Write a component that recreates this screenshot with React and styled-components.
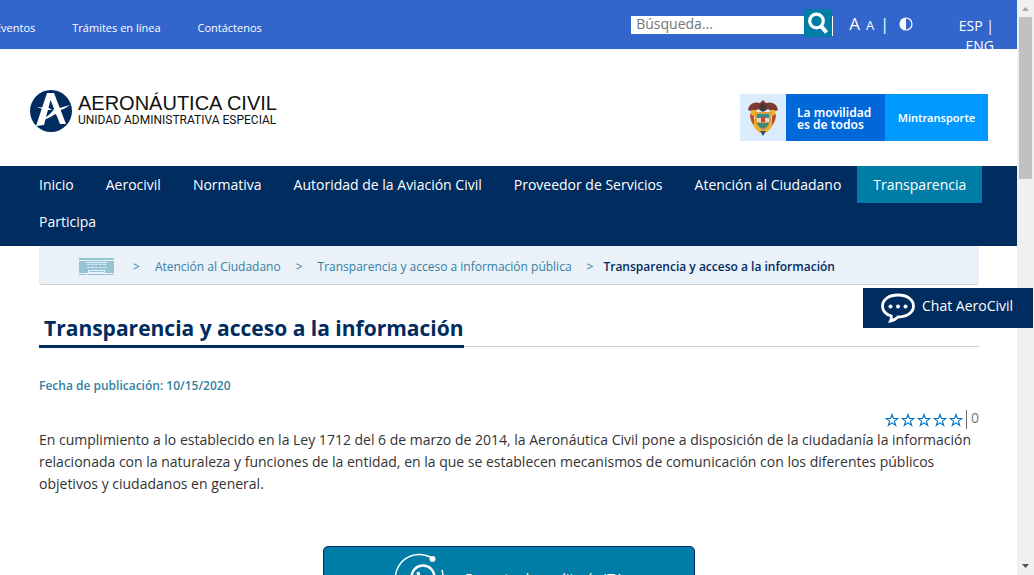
import React from "react";
import styled, { createGlobalStyle } from "styled-components";

const navy = "#002c5f";
const teal = "#007da7";
const blue = "#3266cc";
const muted = "#35809f";

const GlobalStyle = createGlobalStyle`
  * { box-sizing: border-box; }
  body { margin: 0; background: #fff; font-family: "Open Sans", "Noto Sans", sans-serif; }
  a { color: inherit; text-decoration: none; }
  ul, ol { list-style: none; margin: 0; padding: 0; }
  button { font-family: inherit; border: 0; cursor: pointer; }
  svg { display: block; flex: none; }
`;

const Shell = styled.div`
  display: flex;
  height: 100vh;
  overflow: hidden;
`;

const Page = styled.div`
  flex: 1;
  min-width: 0;
  height: 100%;
  overflow: hidden;
`;

const TopBar = styled.header`
  display: flex;
  justify-content: space-between;
  height: 49px;
  overflow: hidden;
  background: ${blue};
  color: #fff;
`;

const TopLinks = styled.ul`
  display: flex;
  gap: 37px;
  margin-left: -5px;
  padding-top: 20px;
  font-size: 11px;
  line-height: 16px;
  white-space: nowrap;
`;

const TopTools = styled.div`
  display: flex;
  align-items: flex-start;
  padding-right: 23px;
`;

const SearchForm = styled.form`
  display: flex;
  align-items: flex-start;
  padding-top: 9px;
`;

const SearchInput = styled.input`
  width: 173px;
  height: 18px;
  margin-top: 7px;
  padding: 0 5px 3px;
  border: 0;
  border-radius: 0;
  background: #fff;
  font: 14px "Open Sans", sans-serif;
  color: #333;
  &::placeholder { color: #757575; opacity: 1; }
`;

const SearchButton = styled.button`
  display: flex;
  align-items: center;
  justify-content: center;
  width: 28px;
  height: 28px;
  padding: 0;
  background: ${teal};
`;

const SearchEdge = styled.span`
  width: 1px;
  height: 20px;
  margin-top: 7px;
  background: #fff;
`;

const Access = styled.div`
  display: flex;
  align-items: baseline;
  gap: 6px;
  padding-top: 12px;
  margin-left: 16px;
  line-height: 24px;
`;

const Divider = styled.span`
  margin-right: 4px;
`;

const PlainButton = styled.button`
  padding: 0;
  background: none;
  color: #fff;
  font-size: ${(p) => p.$size || 14}px;
`;

const ContrastButton = styled(PlainButton)`
  align-self: flex-start;
  padding-top: 5px;
`;

const Languages = styled.div`
  width: 40px;
  margin-left: 41px;
  padding-top: 16px;
  text-align: right;
  font-size: 14px;
  line-height: 20px;
`;

const Brand = styled.div`
  display: flex;
  align-items: center;
  justify-content: space-between;
  height: 117px;
  padding: 6px 29px 0 30px;
`;

const Logo = styled.a`
  display: flex;
  align-items: center;
  gap: 6px;
  color: #111;
  font-family: "Liberation Sans", Arial, sans-serif;
  white-space: nowrap;
`;

const LogoName = styled.span`
  display: block;
  font-size: 20px;
  line-height: 18px;
`;

const LogoUnit = styled.span`
  display: block;
  font-family: Roboto, "Liberation Sans", sans-serif;
  font-size: 12px;
  line-height: 16px;
`;

const Ministry = styled.a`
  display: flex;
  height: 47px;
  margin-top: 14px;
  color: #fff;
  font-family: "Noto Sans", sans-serif;
  font-weight: 600;
`;

const Crest = styled.span`
  display: flex;
  align-items: center;
  justify-content: center;
  width: 46px;
  background: #dbecff;
`;

const Slogan = styled.span`
  display: flex;
  align-items: center;
  width: 99px;
  padding: 3px 0 0 11px;
  background: #0068d9;
  font-size: 12px;
  line-height: 12px;
`;

const MinistryName = styled.span`
  display: flex;
  align-items: center;
  justify-content: center;
  width: 103px;
  background: #0099ff;
  font-size: 11px;
`;

const MainNav = styled.nav`
  padding: 0 23px 6px;
  background: ${navy};
`;

const NavList = styled.ul`
  display: flex;
  flex-wrap: wrap;
`;

const NavLink = styled.a`
  display: block;
  height: 37px;
  padding: 0 16px;
  background: ${(p) => (p.$active ? teal : "transparent")};
  color: #fff;
  font-size: 14px;
  font-weight: 500;
  line-height: 37px;
  white-space: nowrap;
`;

const Content = styled.main`
  padding: 0 38px 0 39px;
`;

const Crumbs = styled.ol`
  display: flex;
  align-items: center;
  height: 39px;
  padding: 2px 40px 0;
  border-bottom: 1px solid #ccc;
  border-radius: 4px;
  background: #eaf1f9;
  color: ${muted};
  font-size: 12px;
  white-space: nowrap;
`;

const Crumb = styled.li`
  display: flex;
  align-items: center;
  color: ${(p) => (p.$current ? navy : muted)};
  font-weight: ${(p) => (p.$current ? 600 : 400)};
  &:not(:first-child)::before {
    content: ">";
    margin: 0 ${(p) => (p.$current ? 10 : 15)}px 0 15px;
    color: ${muted};
    font-weight: 400;
  }
`;

const HomeLink = styled.a`
  margin-right: 4px;
`;

const TitleRow = styled.div`
  display: flex;
  align-items: flex-end;
  margin-top: 29px;
`;

const Title = styled.h1`
  margin: 0;
  padding: 0 0 3px 5px;
  border-bottom: 3px solid ${navy};
  color: ${navy};
  font-size: 21px;
  font-weight: 700;
  line-height: 28px;
  white-space: nowrap;
`;

const TitleRule = styled.span`
  flex: 1;
  height: 2px;
  border-top: 1px solid #ccc;
`;

const Published = styled.p`
  margin: 29px 0 0;
  color: ${muted};
  font-size: 12px;
  font-weight: 600;
  line-height: 18px;
`;

const Rating = styled.div`
  display: flex;
  align-items: center;
  justify-content: flex-end;
  gap: 2px;
  margin-top: 15px;
  height: 19px;
`;

const RatingCount = styled.span`
  margin-left: 1px;
  padding: 0 0 3px 4px;
  border-left: 1px solid #666;
  color: #777;
  font-size: 14px;
  line-height: 16px;
`;

const Paragraph = styled.p`
  margin: 0;
  color: #333;
  font-size: 14px;
  line-height: 22px;
`;

const ReportLink = styled.a`
  display: flex;
  align-items: center;
  gap: 19px;
  width: 372px;
  height: 64px;
  margin: 51px auto 0;
  padding-left: 70px;
  border: 1px solid ${navy};
  border-radius: 5px;
  background: ${teal};
  color: #fff;
  font-size: 14px;
  font-weight: 500;
`;

const ChatButton = styled.button`
  position: fixed;
  top: 288px;
  right: 1px;
  display: flex;
  align-items: center;
  gap: 6px;
  width: 170px;
  height: 40px;
  padding: 0 0 0 17px;
  background: ${navy};
  color: #fff;
  font-size: 14px;
  line-height: 20px;
  white-space: nowrap;
`;

const ChatLabel = styled.span`
  padding-bottom: 4px;
`;

const Scroll = styled.div`
  display: flex;
  flex-direction: column;
  align-items: center;
  width: 17px;
  background: #f0f0f0;
`;

const Thumb = styled.div`
  width: 13px;
  height: 162px;
  margin-bottom: auto;
  background: #c1c1c1;
`;

const AeroMark = () => (
  <svg width="42" height="42" viewBox="0 0 42 42" aria-hidden="true">
    <circle cx="21" cy="21" r="21" fill={navy} />
    <path d="M17 3h7l12 31h-6L20.500 10 14 35l-8 1z" fill="#fff" />
    <path d="M7 32C14 29 20 25 24 19l1-3 1 3c5-1 9-3 14-4-4 3-8 5-12 6l2 7-5-4c-5 4-11 6-18 8z" fill="#fff" />
    <path d="M7 17l12 1 3 2-7 0z" fill="#fff" />
  </svg>
);

const CrestMark = () => (
  <svg width="32" height="38" viewBox="0 0 32 38" aria-hidden="true">
    <path d="M1 11C2 5 7 2 13 4l3-3 3 3c6-2 11 1 12 7l-6 2-4-3-5 3-5-3-4 3z" fill="#7d382f" />
    <path d="M4 11h6l-3 8 5 9 4 4-3 2C6 29 2 21 4 11zM28 11h-6l3 8-5 9-4 4 3 2c7-5 11-13 9-23z" fill="#efb22f" />
    <path d="M3 15l4 2 0 9c-3-3-4-7-4-11zM29 15l-4 2 0 9c3-3 4-7 4-11z" fill="#bd4c32" />
    <path d="M8 13h16v8c0 6-4 9-8 11-4-2-8-5-8-11z" fill="#d8a346" />
    <path d="M10 15h12v4H10z" fill="#398b92" />
    <path d="M10 19h12v4H10z" fill="#e9d6bd" />
    <path d="M14 18h4v5h-4z" fill="#c84638" />
    <path d="M10 24h12c-1 3-3 5-6 6-3-1-5-3-6-6z" fill="#448778" />
    <path d="M12 7l4-3 4 3-2 5h-4z" fill="#443a36" />
    <path d="M13 32h6l-3 5z" fill="#3b496b" />
  </svg>
);

const SearchMark = () => (
  <svg width="22" height="24" viewBox="0 0 22 24" fill="none" stroke="#fff" aria-hidden="true">
    <circle cx="9.500" cy="10" r="6.800" strokeWidth="3.200" />
    <path d="M14 15l5.500 6.500" strokeWidth="4.200" />
  </svg>
);

const ContrastMark = () => (
  <svg width="14" height="14" viewBox="0 0 14 14" aria-hidden="true">
    <circle cx="7" cy="7" r="6" fill="none" stroke="#fff" strokeWidth="1.2" />
    <path d="M7 1a6 6 0 0 0 0 12z" fill="#fff" />
  </svg>
);

const BuildingMark = () => (
  <svg width="35" height="17" viewBox="0 0 35 17" fill="#96c4d4" aria-hidden="true">
    <path d="M0 0h35v2H0zM0 3h7v12H0zM28 3h7v12h-7zM7 3h21v1H7zM0 16h8v1H0zM27 16h8v1h-8z" />
    <path d="M7 5h21v10h-2v-3H9v3H7z" />
    <path d="M8 6.500h19M8 9.500h19" stroke="#dbe9f1" strokeWidth="1" strokeDasharray="3 1" />
    <path d="M10 13h15v1H10zM9 16h17v1H9z" />
  </svg>
);

const Star = () => (
  <svg width="14" height="14" viewBox="0 0 14 14" fill="none" stroke="#0072c6" strokeWidth="1.1" aria-hidden="true">
    <path d="M7 1.5l1.5 4h4.4L9.4 8.1l1.3 4.2L7 9.8l-3.7 2.5 1.3-4.2L1.1 5.5h4.4z" />
  </svg>
);

const ChatMark = () => (
  <svg width="36" height="30" viewBox="0 0 36 30" aria-hidden="true">
    <path d="M18 2c9 0 15.500 4.500 15.500 11S27 24 18 24c-2 2-4 3.500-7.500 4 .8-1.500 1-3 .8-5C6 21.500 2.500 18 2.500 13 2.500 6.500 9 2 18 2z" fill="none" stroke="#fff" strokeWidth="2.8" />
    <g fill="#fff">
      <circle cx="10.500" cy="13.500" r="2" />
      <circle cx="18" cy="13.500" r="2" />
      <circle cx="25.500" cy="13.500" r="2" />
    </g>
  </svg>
);

const ReportMark = () => (
  <svg width="52" height="52" viewBox="0 0 52 52" fill="none" stroke="#fff" aria-hidden="true">
    <path d="M2 32A24 24 0 0 1 38 6" strokeWidth="1.500" />
    <circle cx="38.500" cy="7" r="3" fill="#fff" stroke="none" />
    <path d="M48 18a24 24 0 0 1-34 28" strokeWidth="1.500" />
    <circle cx="29" cy="25" r="11.500" strokeWidth="2.500" />
    <path d="M24 20c1 7 4 10 10 11" strokeWidth="3" />
  </svg>
);

const Arrow = ({ up }) => (
  <svg width="17" height="17" viewBox="0 0 17 17" aria-hidden="true">
    <path d={up ? "M5 11h7L8.500 7z" : "M5 6h7L8.500 10z"} fill={up ? "#a3a3a3" : "#505050"} />
  </svg>
);

const navItems = [
  "Inicio",
  "Aerocivil",
  "Normativa",
  "Autoridad de la Aviación Civil",
  "Proveedor de Servicios",
  "Atención al Ciudadano",
  "Transparencia",
  "Participa",
];

export default function App() {
  return (
    <>
      <GlobalStyle />
      <Shell>
        <Page>
          <TopBar>
            <TopLinks>
              {["Eventos", "Trámites en línea", "Contáctenos"].map((t) => (
                <li key={t}><a href="#top">{t}</a></li>
              ))}
            </TopLinks>
            <TopTools>
              <SearchForm role="search">
                <SearchInput type="text" aria-label="Búsqueda" placeholder="Búsqueda..." />
                <SearchButton type="button" aria-label="Buscar"><SearchMark /></SearchButton>
                <SearchEdge />
              </SearchForm>
              <Access>
                <PlainButton type="button" aria-label="Aumentar texto" $size={17}>A</PlainButton>
                <PlainButton type="button" aria-label="Reducir texto" $size={13}>A</PlainButton>
                <Divider>|</Divider>
                <ContrastButton type="button" aria-label="Contraste"><ContrastMark /></ContrastButton>
              </Access>
              <Languages>
                <a href="#esp">ESP</a> | <a href="#eng">ENG</a>
              </Languages>
            </TopTools>
          </TopBar>
          <Brand>
            <Logo href="#inicio">
              <AeroMark />
              <span>
                <LogoName>AERONÁUTICA CIVIL</LogoName>
                <LogoUnit>UNIDAD ADMINISTRATIVA ESPECIAL</LogoUnit>
              </span>
            </Logo>
            <Ministry href="#mintransporte">
              <Crest><CrestMark /></Crest>
              <Slogan>La movilidad<br />es de todos</Slogan>
              <MinistryName>Mintransporte</MinistryName>
            </Ministry>
          </Brand>
          <MainNav>
            <NavList>
              {navItems.map((t) => (
                <li key={t}><NavLink href="#nav" $active={t === "Transparencia"}>{t}</NavLink></li>
              ))}
            </NavList>
          </MainNav>
          <Content>
            <Crumbs>
              <Crumb><HomeLink href="#inicio" aria-label="Inicio"><BuildingMark /></HomeLink></Crumb>
              <Crumb><a href="#atencion">Atención al Ciudadano</a></Crumb>
              <Crumb><a href="#publica">Transparencia y acceso a información pública</a></Crumb>
              <Crumb $current>Transparencia y acceso a la información</Crumb>
            </Crumbs>
            <TitleRow>
              <Title>Transparencia y acceso a la información</Title>
              <TitleRule />
            </TitleRow>
            <Published>Fecha de publicación: 10/15/2020</Published>
            <Rating>
              <Star /><Star /><Star /><Star /><Star />
              <RatingCount>0</RatingCount>
            </Rating>
            <Paragraph>
              En cumplimiento a lo establecido en la Ley 1712 del 6 de marzo de 2014, la Aeronáutica Civil pone a disposición de la ciudadanía la información relacionada con la naturaleza y funciones de la entidad, en la que se establecen mecanismos de comunicación con los diferentes públicos objetivos y ciudadanos en general.
            </Paragraph>
            <ReportLink href="#ita"><ReportMark />Reporte de auditoría ITA</ReportLink>
          </Content>
        </Page>
        <Scroll aria-hidden="true">
          <Arrow up />
          <Thumb />
          <Arrow />
        </Scroll>
      </Shell>
      <ChatButton type="button"><ChatMark /><ChatLabel>Chat AeroCivil</ChatLabel></ChatButton>
    </>
  );
}
